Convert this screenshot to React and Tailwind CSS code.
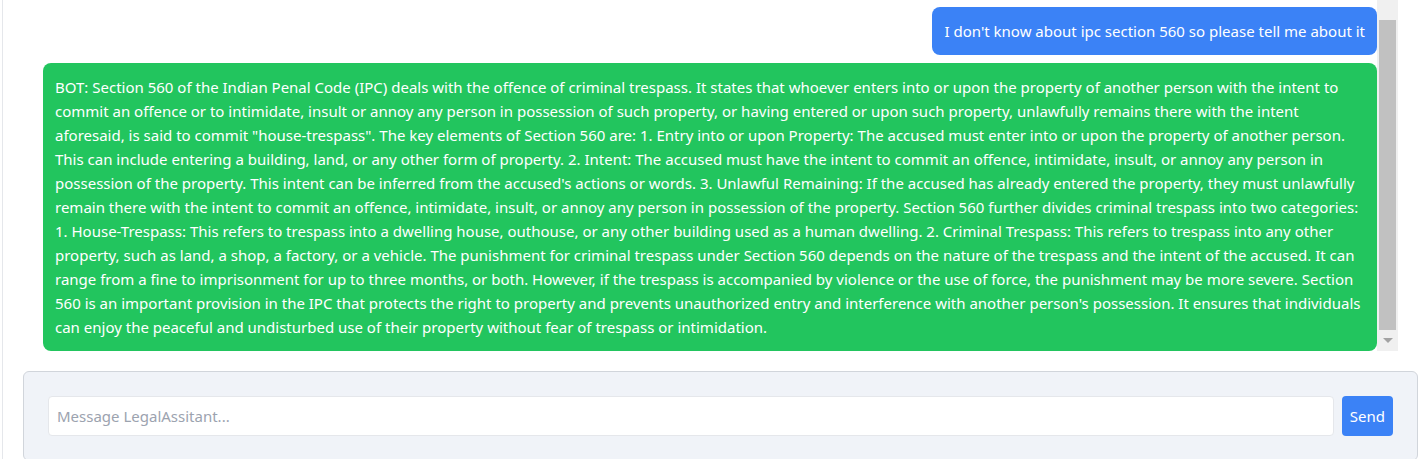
import { useState } from 'react';

const USER_TEXT = "I don't know about ipc section 560 so please tell me about it";

const BOT_LINES = [
  'BOT: Section 560 of the Indian Penal Code (IPC) deals with the offence of criminal trespass. It states that whoever enters into or upon the property of another person with the intent to',
  'commit an offence or to intimidate, insult or annoy any person in possession of such property, or having entered or upon such property, unlawfully remains there with the intent',
  'aforesaid, is said to commit "house-trespass". The key elements of Section 560 are: 1. Entry into or upon Property: The accused must enter into or upon the property of another person.',
  'This can include entering a building, land, or any other form of property. 2. Intent: The accused must have the intent to commit an offence, intimidate, insult, or annoy any person in',
  "possession of the property. This intent can be inferred from the accused's actions or words. 3. Unlawful Remaining: If the accused has already entered the property, they must unlawfully",
  'remain there with the intent to commit an offence, intimidate, insult, or annoy any person in possession of the property. Section 560 further divides criminal trespass into two categories:',
  '1. House-Trespass: This refers to trespass into a dwelling house, outhouse, or any other building used as a human dwelling. 2. Criminal Trespass: This refers to trespass into any other',
  'property, such as land, a shop, a factory, or a vehicle. The punishment for criminal trespass under Section 560 depends on the nature of the trespass and the intent of the accused. It can',
  'range from a fine to imprisonment for up to three months, or both. However, if the trespass is accompanied by violence or the use of force, the punishment may be more severe. Section',
  "560 is an important provision in the IPC that protects the right to property and prevents unauthorized entry and interference with another person's possession. It ensures that individuals",
  'can enjoy the peaceful and undisturbed use of their property without fear of trespass or intimidation.',
];

const font = { fontFamily: '"Noto Sans", "Open Sans", sans-serif' };

function Scrollbar() {
  return (
    <div className="flex w-[21px] shrink-0 flex-col bg-[#f0f0f0] px-[2px]">
      <div className="mt-[20px] h-[310px] bg-[#c1c1c1]" />
      <div className="flex h-[20px] items-center justify-center">
        <div className="h-0 w-0 border-x-[5px] border-t-[5px] border-x-transparent border-t-[#a3a3a3]" />
      </div>
    </div>
  );
}

export default function App() {
  const [message, setMessage] = useState('');

  return (
    <div className="h-[459px] overflow-hidden bg-white" style={font}>
      <div className="ml-[2px] flex h-full flex-col border-l border-[#e5e7eb]">
        <div className="flex h-[351px] shrink-0 pr-[30px]">
          <div className="flex flex-1 flex-col gap-2 pt-[7px]">
            <div className="flex justify-end">
              <div className="rounded-lg bg-[#3b82f6] px-3 py-3 text-[15px] leading-6 text-white">
                {USER_TEXT}
              </div>
            </div>
            <div className="ml-10 rounded-lg bg-[#22c55e] px-3 py-3 text-[15px] leading-6 text-white">
              {BOT_LINES.map((line, i) => (
                <span key={i} className="block whitespace-nowrap">
                  {line}
                </span>
              ))}
            </div>
          </div>
          <Scrollbar />
        </div>

        <div className="ml-5 mr-[10px] mt-5 rounded-md border border-[#d1d5db] bg-[#f0f3f8] p-6">
          <div className="flex gap-2">
            <input
              value={message}
              onChange={(e) => setMessage(e.target.value)}
              placeholder="Message LegalAssitant..."
              className="h-10 flex-1 rounded border border-[#e5e7eb] bg-white px-2 text-[15px] text-gray-700 outline-none placeholder:text-[#9ca3af]"
              style={font}
            />
            <button
              type="button"
              className="h-10 rounded bg-[#3b82f6] px-2 text-[15px] text-white"
              style={font}
            >
              Send
            </button>
          </div>
        </div>
      </div>
    </div>
  );
}
